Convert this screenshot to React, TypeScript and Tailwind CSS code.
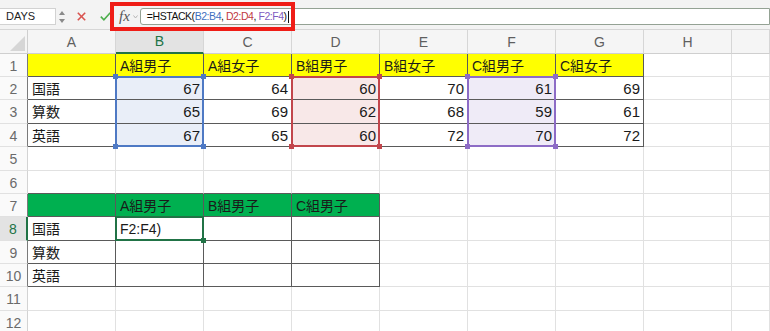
import React from 'react';

const data: Record<number, string[]> = {
  1: ['', 'A組男子', 'A組女子', 'B組男子', 'B組女子', 'C組男子', 'C組女子', '', ''],
  2: ['国語', '67', '64', '60', '70', '61', '69', '', ''],
  3: ['算数', '65', '69', '62', '68', '59', '61', '', ''],
  4: ['英語', '67', '65', '60', '72', '70', '72', '', ''],
  7: ['', 'A組男子', 'B組男子', 'C組男子', '', '', '', '', ''],
  8: ['国語', 'F2:F4)', '', '', '', '', '', '', ''],
  9: ['算数', '', '', '', '', '', '', '', ''],
  10: ['英語', '', '', '', '', '', '', '', ''],
};

const COLS = ['A', 'B', 'C', 'D', 'E', 'F', 'G', 'H', ''];

function fillClass(r: number, c: number): string {
  if (r === 1 && c >= 1 && c <= 7) return 'bg-[#ffff00]';
  if (r >= 2 && r <= 4) {
    if (c === 2) return 'bg-[#e9eef8]';
    if (c === 4) return 'bg-[#f8e8e8]';
    if (c === 6) return 'bg-[#efebf7]';
  }
  if (r === 7 && c >= 1 && c <= 4) return 'bg-[#00b050]';
  return 'bg-white';
}

function Cell({ r, c }: { r: number; c: number }) {
  const upper = r >= 1 && r <= 4 && c >= 1 && c <= 7;
  const lower = r >= 7 && r <= 10 && c >= 1 && c <= 4;
  const r6 = r === 6 && c >= 1 && c <= 4;
  const rightCls = upper || lower ? 'border-r-[#5a5a5a]' : 'border-r-[#e1e1e1]';
  const bottomCls = upper || lower || r6 ? 'border-b-[#5a5a5a]' : 'border-b-[#e1e1e1]';
  const text = data[r] ? data[r][c - 1] : '';
  const numeric = /^\d+$/.test(text);
  return (
    <div
      className={`flex items-center overflow-hidden whitespace-nowrap border-r border-b ${rightCls} ${bottomCls} ${fillClass(r, c)} pt-[2px] pl-[4px] pr-[3px] text-[#1a1a1a] ${
        numeric ? 'justify-end text-[15px]' : 'justify-start text-[14px]'
      }`}
    >
      {text}
    </div>
  );
}

function RowHeader({ r }: { r: number }) {
  const active = r === 8;
  const tableRow = (r >= 1 && r <= 4) || (r >= 7 && r <= 10);
  return (
    <div
      className={`flex items-center justify-center pt-[2px] border-b border-b-[#e1e1e1] font-['Liberation_Sans',sans-serif] text-[14px] ${
        active
          ? 'bg-[#e3e3e3] text-[#217346] border-r-2 border-r-[#217346]'
          : tableRow
          ? 'bg-[#fafafa] text-[#6a6a6a] border-r border-r-[#7a7a7a]'
          : 'bg-[#fafafa] text-[#6a6a6a] border-r border-r-[#d3d3d3]'
      }`}
    >
      {r}
    </div>
  );
}

function ColHeader({ label }: { label: string }) {
  const active = label === 'B';
  return (
    <div
      className={`flex items-center justify-center pt-[1px] border-r border-r-[#d6d6d6] font-['Liberation_Sans',sans-serif] text-[14px] ${
        active
          ? 'bg-[#e3e3e3] text-[#217346] border-b-2 border-b-[#217346]'
          : 'bg-[#f5f5f5] text-[#5f5f5f] border-b border-b-[#cfcfcf]'
      }`}
    >
      {label}
    </div>
  );
}

function Handle({ pos, color }: { pos: 'tl' | 'tr' | 'bl' | 'br'; color: string }) {
  const p =
    pos === 'tl'
      ? '-left-[4px] -top-[4px]'
      : pos === 'tr'
      ? '-right-[4px] -top-[4px]'
      : pos === 'bl'
      ? '-left-[4px] -bottom-[4px]'
      : '-right-[4px] -bottom-[4px]';
  return <div className={`absolute w-[5px] h-[5px] ${p} ${color}`} />;
}

const GRID =
  'grid grid-cols-[28px_repeat(8,88px)_1fr] grid-rows-[24px_23px_23px_24px_23px_24px_23px_23px_24px_23px_23px_24px_23px]';

function Sheet() {
  const rows = Array.from({ length: 12 }, (_, i) => i + 1);
  return (
    <div className="relative">
      <div className={GRID}>
        <div className="relative bg-[#f5f5f5] border-r border-b border-[#cfcfcf]">
          <svg className="absolute right-[2px] bottom-[2px]" width="15" height="15" viewBox="0 0 15 15">
            <polygon points="15,0 15,15 0,15" fill="#d6d6d6" />
          </svg>
        </div>
        {COLS.map((l, i) => (
          <ColHeader key={'h' + i} label={l} />
        ))}
        {rows.map((r) => (
          <React.Fragment key={r}>
            <RowHeader r={r} />
            {COLS.map((_, i) => (
              <Cell key={r + '-' + i} r={r} c={i + 1} />
            ))}
          </React.Fragment>
        ))}
      </div>
      <div className={`absolute inset-0 pointer-events-none ${GRID}`}>
        <div className="relative col-start-3 row-start-3 row-span-3 -ml-px -mt-px border-2 border-[#4e79c4]">
          <Handle pos="tl" color="bg-[#4e79c4]" />
          <Handle pos="tr" color="bg-[#4e79c4]" />
          <Handle pos="bl" color="bg-[#4e79c4]" />
          <Handle pos="br" color="bg-[#4e79c4]" />
        </div>
        <div className="relative col-start-5 row-start-3 row-span-3 -ml-px -mt-px border-2 border-[#c2464c]">
          <Handle pos="tl" color="bg-[#c2464c]" />
          <Handle pos="tr" color="bg-[#c2464c]" />
          <Handle pos="bl" color="bg-[#c2464c]" />
          <Handle pos="br" color="bg-[#c2464c]" />
        </div>
        <div className="relative col-start-7 row-start-3 row-span-3 -ml-px -mt-px border-2 border-[#8d6cc6]">
          <Handle pos="tl" color="bg-[#8d6cc6]" />
          <Handle pos="tr" color="bg-[#8d6cc6]" />
          <Handle pos="bl" color="bg-[#8d6cc6]" />
          <Handle pos="br" color="bg-[#8d6cc6]" />
        </div>
        <div className="relative col-start-3 row-start-9 -ml-px -mt-px border-2 border-[#217346]">
          <Handle pos="br" color="bg-[#217346]" />
        </div>
      </div>
    </div>
  );
}

function Toolbar() {
  return (
    <div className="h-[30px] bg-[#f3f3f3] border-b border-[#d6d6d6] flex items-start pt-[8px]">
      <div className="w-[56px] h-[17px] bg-white border border-l-0 border-[#d2d2d2] flex items-center pl-[6px] text-[11px] text-[#222] font-['Liberation_Sans',sans-serif]">
        DAYS
      </div>
      <div className="h-[17px] flex items-center ml-[3px]">
        <svg width="6" height="12" viewBox="0 0 6 12">
          <polygon points="3,0 6,4 0,4" fill="#8a8a8a" />
          <polygon points="0,8 6,8 3,12" fill="#8a8a8a" />
        </svg>
      </div>
      <div className="h-[17px] flex items-center ml-[12px]">
        <svg width="9" height="9" viewBox="0 0 9 9">
          <line x1="0.8" y1="0.8" x2="8.2" y2="8.2" stroke="#d9534f" strokeWidth="1.6" />
          <line x1="8.2" y1="0.8" x2="0.8" y2="8.2" stroke="#d9534f" strokeWidth="1.6" />
        </svg>
      </div>
      <div className="h-[17px] flex items-center ml-[14px]">
        <svg width="11" height="9" viewBox="0 0 11 9">
          <polyline points="0.8,4.6 3.9,7.8 10.2,0.8" fill="none" stroke="#4cae4c" strokeWidth="1.6" />
        </svg>
      </div>
      <div className="h-[17px] flex items-center ml-[8px] font-['Liberation_Serif',serif] italic text-[15px] text-[#555] leading-none">
        fx
      </div>
      <div className="h-[17px] flex items-center ml-[3px]">
        <svg width="5" height="4" viewBox="0 0 5 4">
          <polyline points="0.5,0.5 2.5,3 4.5,0.5" fill="none" stroke="#b5b5b5" strokeWidth="1" />
        </svg>
      </div>
      <div className="ml-[2px] flex-1 h-[17px] bg-white border border-[#94a294] rounded-l-[3px] flex items-center pl-[6px] font-['Liberation_Sans',sans-serif] text-[10.5px] tracking-[-0.45px] text-[#111] whitespace-nowrap">
        <span>=HSTACK(</span>
        <span className="text-[#3e6fbf]">B2:B4</span>
        <span>,&nbsp;</span>
        <span className="text-[#c0393f]">D2:D4</span>
        <span>,&nbsp;</span>
        <span className="text-[#7f5bbf]">F2:F4</span>
        <span>)</span>
        <span className="inline-block w-px h-[12px] bg-[#111] ml-px" />
      </div>
    </div>
  );
}

export default function App() {
  return (
    <div className="relative w-[770px] h-[331px] overflow-hidden bg-white font-['Liberation_Sans','Noto_Sans_CJK_JP',sans-serif]">
      <Toolbar />
      <Sheet />
      <div className="absolute left-[110px] top-[2px] w-[185px] h-[29px] border-4 border-[#ef1d17] z-30 pointer-events-none" />
    </div>
  );
}
